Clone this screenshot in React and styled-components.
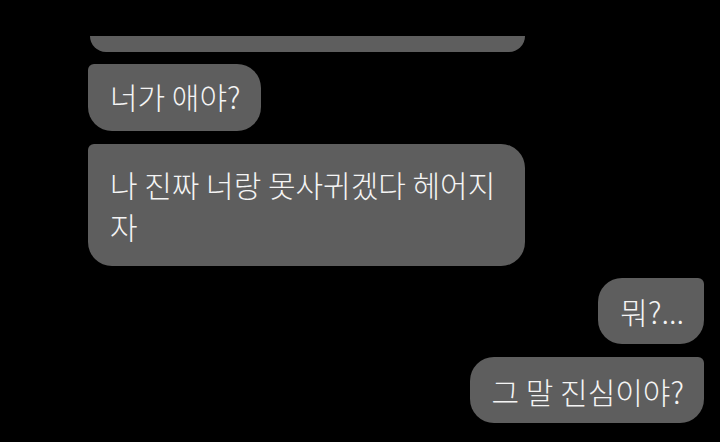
import React from "react";
import styled, { createGlobalStyle, css } from "styled-components";

const GlobalStyle = createGlobalStyle`
  html, body {
    margin: 0;
    padding: 0;
    background: #000;
  }
`;

const Screen = styled.div`
  width: 720px;
  height: 442px;
  overflow: hidden;
  background: #000;
  box-sizing: border-box;
  padding-top: 36px;
  display: flex;
  flex-direction: column;
  font-family: "Noto Sans CJK KR", "Noto Sans", sans-serif;
`;

const Row = styled.div`
  display: flex;
  justify-content: ${(p) => (p.$me ? "flex-end" : "flex-start")};
  padding: 0 16px 0 88px;
  margin-top: ${(p) => p.$gap || 0}px;
`;

const CutBubble = styled.div`
  width: 435px;
  height: 16px;
  margin-left: 2px;
  background: #5e5e5e;
  border-radius: 0 0 24px 24px;
`;

const Bubble = styled.div`
  box-sizing: border-box;
  max-width: 437px;
  background: #5e5e5e;
  color: #f4f4f4;
  font-size: 30px;
  line-height: 42px;
  font-weight: 300;
  padding: ${(p) => p.$pt}px 20px ${(p) => p.$pb}px 22px;
  ${(p) =>
    p.$me
      ? css`
          border-radius: 24px 6px 24px 24px;
        `
      : css`
          border-radius: 6px 24px 24px 24px;
        `}
`;

const messages = [
  { id: 1, me: false, text: "너가 애야?", gap: 12, pt: 11, pb: 14 },
  { id: 2, me: false, text: "나 진짜 너랑 못사귀겠다 헤어지자", gap: 13, pt: 19, pb: 19 },
  { id: 3, me: true, text: "뭐?...", gap: 12, pt: 12, pb: 12 },
  { id: 4, me: true, text: "그 말 진심이야?", gap: 13, pt: 13, pb: 11 },
];

export default function App() {
  return (
    <>
      <GlobalStyle />
      <Screen>
        <Row>
          <CutBubble />
        </Row>
        {messages.map((m) => (
          <Row key={m.id} $me={m.me} $gap={m.gap}>
            <Bubble $me={m.me} $pt={m.pt} $pb={m.pb}>
              {m.text}
            </Bubble>
          </Row>
        ))}
      </Screen>
    </>
  );
}
